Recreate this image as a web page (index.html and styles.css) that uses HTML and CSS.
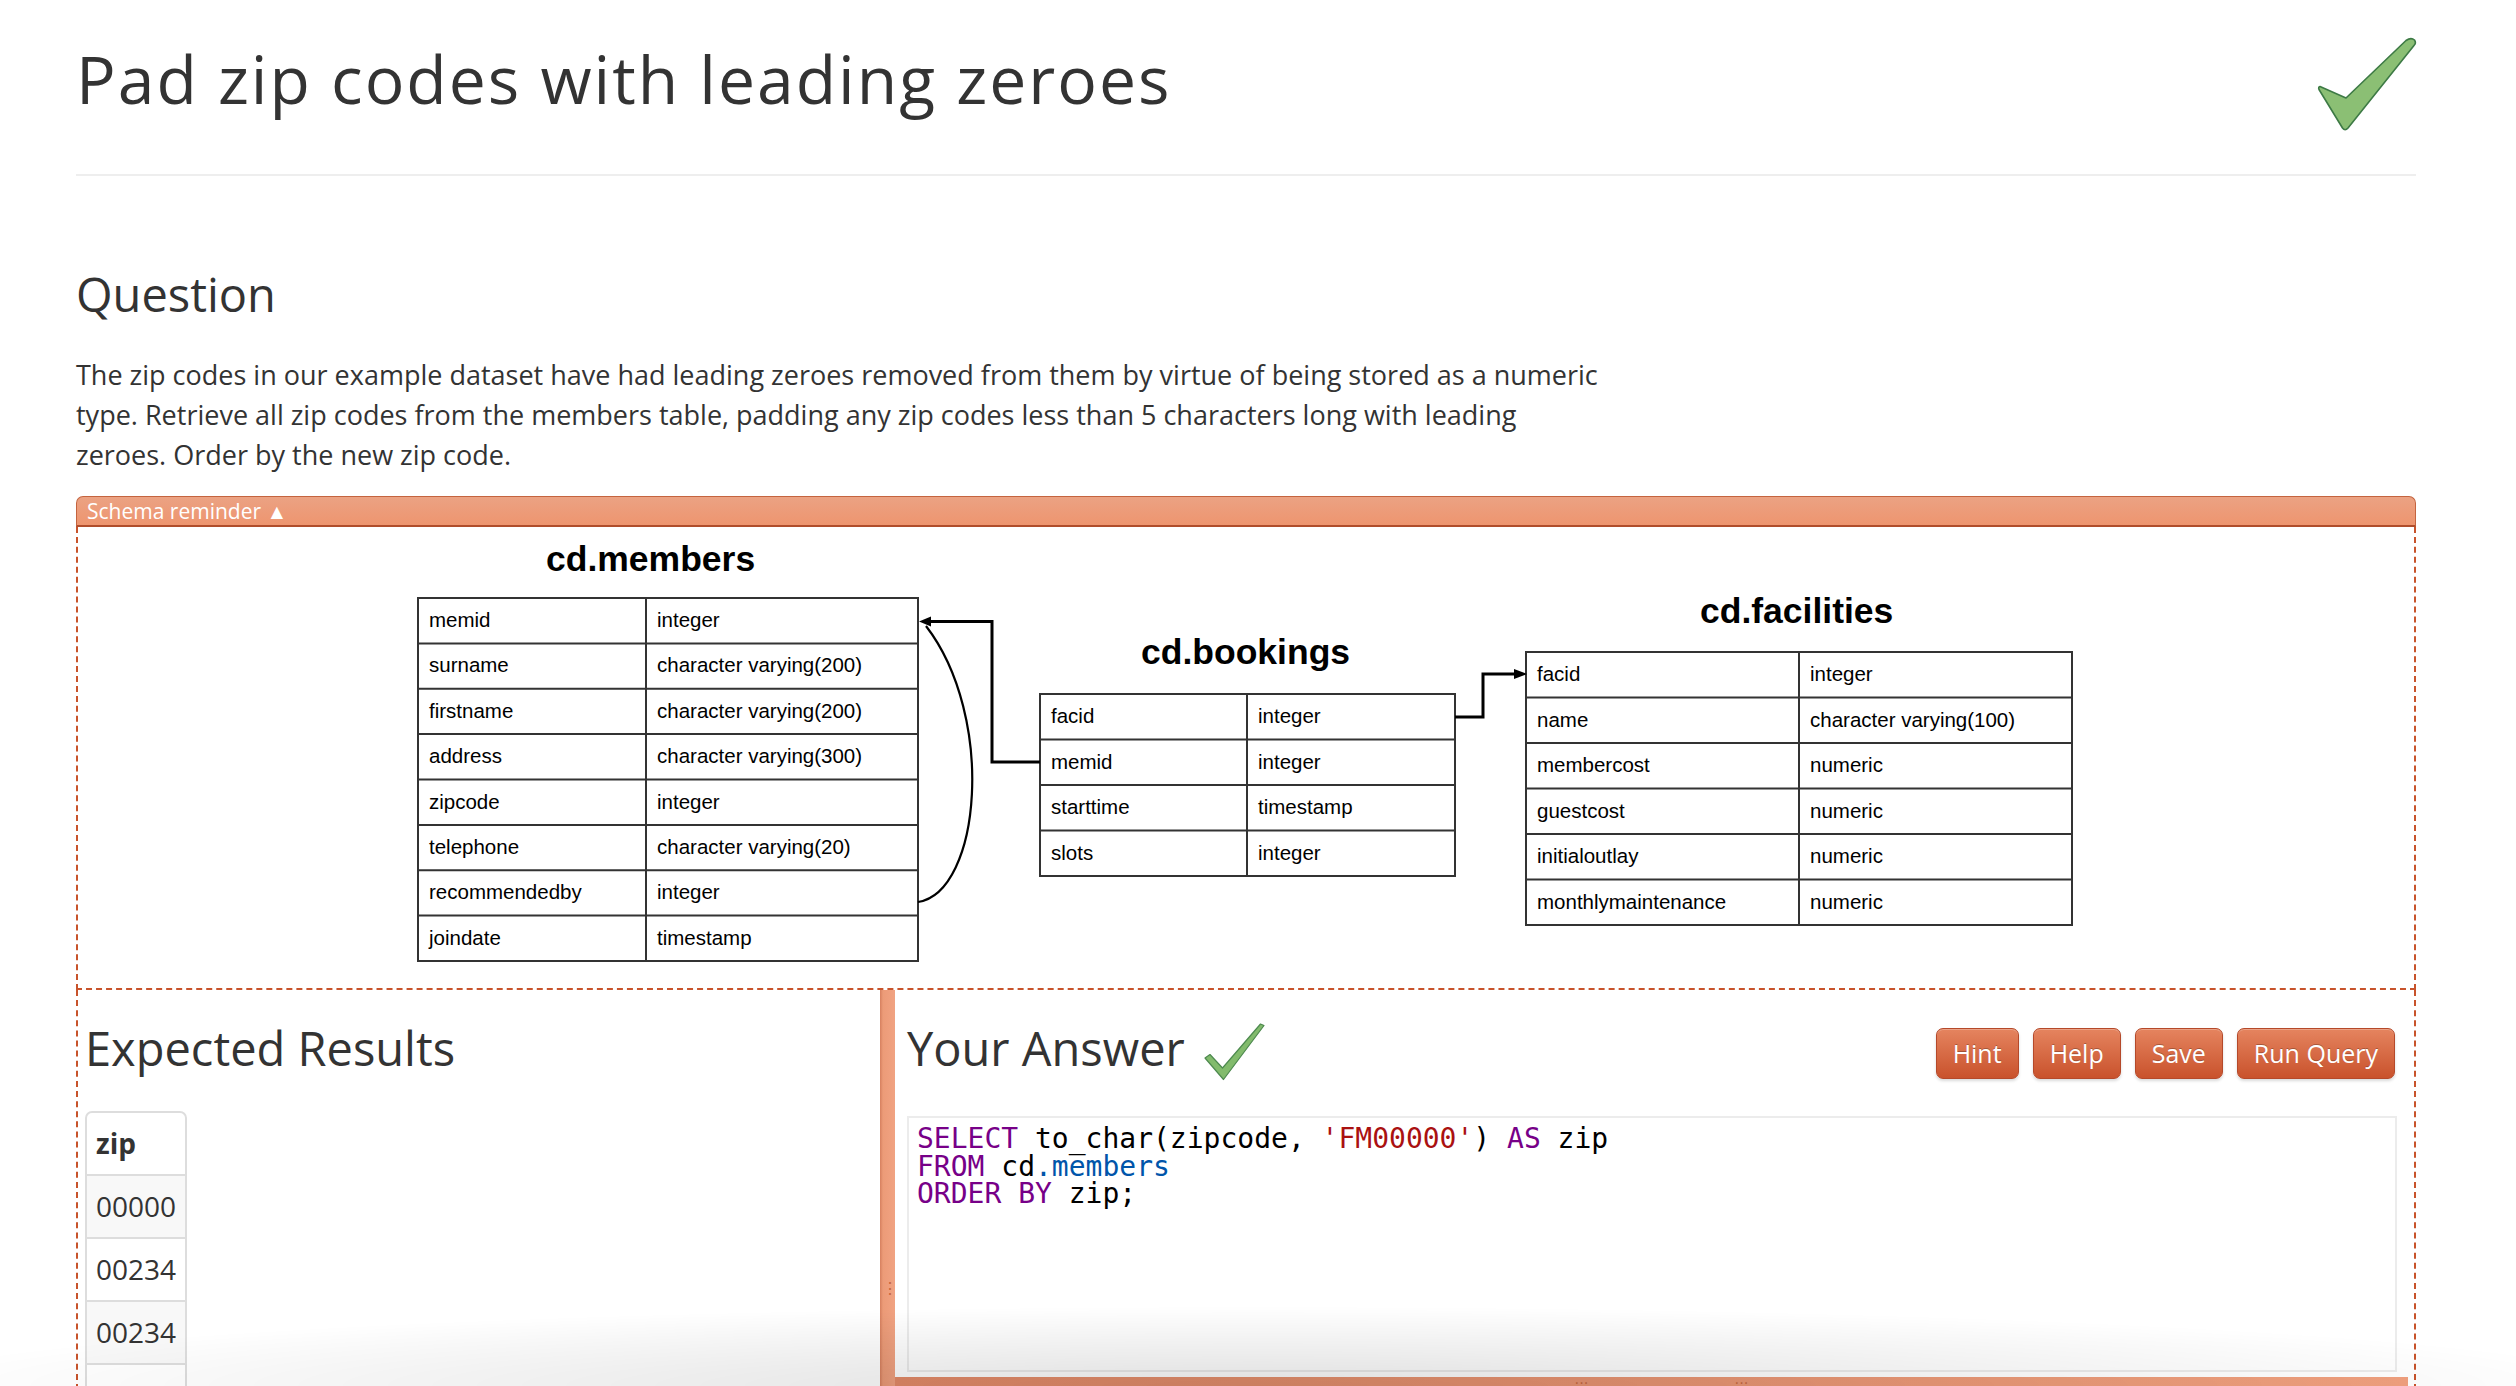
FILE: index.html
```
<!DOCTYPE html>
<html lang="en">
<head>
<meta charset="utf-8">
<title>Pad zip codes with leading zeroes</title>
<link rel="stylesheet" href="styles.css">
</head>
<body>
<div class="page">
  <div class="title-row">
    <h1 class="title">Pad zip codes with leading zeroes</h1>
    <svg class="big-check" width="110" height="105" viewBox="0 0 110 105">
      <path d="M10,56.5 L36,68 L96,10.5 Q101,7 104.5,10 Q106.5,13 104,15.5 L38,98 Q35,101.5 32.5,98 L9,59.5 Q8,57 10,56.5 Z" fill="#8bbf74" stroke="#3d7a45" stroke-width="1.6" stroke-linejoin="round"/>
    </svg>
  </div>
  <hr class="rule">

  <h2 class="section">Question</h2>
  <p class="question">The zip codes in our example dataset have had leading zeroes removed from them by virtue of being stored as a numeric type. Retrieve all zip codes from the members table, padding any zip codes less than 5 characters long with leading zeroes. Order by the new zip code.</p>

  <div class="schema-bar">Schema reminder ▲</div>
  <div class="schema-body">
    <svg class="diagram" width="1670" height="461" viewBox="0 0 1670 461">
      <text class="dg-title" x="135" y="44">cd.members</text>
      <text class="dg-title" x="730" y="137">cd.bookings</text>
      <text class="dg-title" x="1289" y="96">cd.facilities</text>

      <g class="dg-grid">
        <rect x="7" y="71" width="500" height="363"/>
        <path d="M7,116.4H507 M7,161.75H507 M7,207.1H507 M7,252.5H507 M7,297.9H507 M7,343.25H507 M7,388.6H507 M235,71V434"/>
        <rect x="629" y="167" width="415" height="182"/>
        <path d="M629,212.5H1044 M629,258H1044 M629,303.5H1044 M836,167V349"/>
        <rect x="1115" y="125" width="546" height="273"/>
        <path d="M1115,170.5H1661 M1115,216H1661 M1115,261.5H1661 M1115,307H1661 M1115,352.5H1661 M1388,125V398"/>
      </g>

      <g class="dg-cell">
        <text x="18" y="100">memid</text><text x="246" y="100">integer</text>
        <text x="18" y="145.4">surname</text><text x="246" y="145.4">character varying(200)</text>
        <text x="18" y="190.75">firstname</text><text x="246" y="190.75">character varying(200)</text>
        <text x="18" y="236.1">address</text><text x="246" y="236.1">character varying(300)</text>
        <text x="18" y="281.5">zipcode</text><text x="246" y="281.5">integer</text>
        <text x="18" y="326.9">telephone</text><text x="246" y="326.9">character varying(20)</text>
        <text x="18" y="372.25">recommendedby</text><text x="246" y="372.25">integer</text>
        <text x="18" y="417.6">joindate</text><text x="246" y="417.6">timestamp</text>

        <text x="640" y="196">facid</text><text x="847" y="196">integer</text>
        <text x="640" y="241.5">memid</text><text x="847" y="241.5">integer</text>
        <text x="640" y="287">starttime</text><text x="847" y="287">timestamp</text>
        <text x="640" y="332.5">slots</text><text x="847" y="332.5">integer</text>

        <text x="1126" y="154">facid</text><text x="1399" y="154">integer</text>
        <text x="1126" y="199.5">name</text><text x="1399" y="199.5">character varying(100)</text>
        <text x="1126" y="245">membercost</text><text x="1399" y="245">numeric</text>
        <text x="1126" y="290.5">guestcost</text><text x="1399" y="290.5">numeric</text>
        <text x="1126" y="336">initialoutlay</text><text x="1399" y="336">numeric</text>
        <text x="1126" y="381.5">monthlymaintenance</text><text x="1399" y="381.5">numeric</text>
      </g>

      <g class="dg-link">
        <path d="M629,235 H581 V94.5 H518"/>
        <path class="thin" d="M507,375 C570,365 585,190 515,99"/>
        <path d="M1044,190 H1072 V147 H1104"/>
      </g>
      <polygon points="508,94.5 520,89.5 520,99.5" fill="#000"/>
      <polygon points="1116,147 1103,142 1103,152" fill="#000"/>
    </svg>
  </div>

  <div class="workspace">
    <div class="results">
      <h3 class="panel-title">Expected Results</h3>
      <table class="zip-table">
        <thead><tr><th>zip</th></tr></thead>
        <tbody>
          <tr><td>00000</td></tr>
          <tr><td>00234</td></tr>
          <tr><td>00234</td></tr>
          <tr><td>04321</td></tr>
          <tr><td>04321</td></tr>
          <tr><td>10383</td></tr>
        </tbody>
      </table>
    </div>
    <div class="splitter"><span class="grip-v">⋮</span></div>
    <div class="answer">
      <div class="answer-head">
        <h3 class="panel-title">Your Answer<svg class="small-check" width="62" height="58" viewBox="0 0 62 58"><path d="M2,35 L7,31.5 L19.5,45 L57.5,1 L61,2.5 L20.5,56.5 Z" fill="#82bb6c" stroke="#4d8a4f" stroke-width="1.2" stroke-linejoin="round"/></svg></h3>
        <div class="actions">
          <button class="btn">Hint</button>
          <button class="btn">Help</button>
          <button class="btn">Save</button>
          <button class="btn">Run Query</button>
        </div>
      </div>
      <div class="editor"><pre class="code"><span class="kw">SELECT</span> to_char(zipcode, <span class="str">'FM00000'</span>) <span class="kw">AS</span> zip
<span class="kw">FROM</span> cd<span class="var">.members</span>
<span class="kw">ORDER BY</span> zip;</pre></div>
      <div class="hbar"><span class="grip-h g1">···</span><span class="grip-h g2">···</span></div>
    </div>
  </div>
</div>
<div class="fade"></div>
</body>
</html>
```
FILE: styles.css
```
* { box-sizing: border-box; }

html, body {
  margin: 0;
  height: 1386px;
  overflow: hidden;
  background: #fff;
}

body {
  font-family: "Open Sans", Lato, sans-serif;
  color: #333;
}

.page {
  margin-left: 76px;
  width: 2340px;
  padding-top: 40px;
}

.title-row {
  display: flex;
  justify-content: space-between;
  align-items: flex-start;
  height: 76px;
}

.title {
  margin: 0;
  font-size: 66px;
  font-weight: 400;
  line-height: 76px;
  letter-spacing: 2px;
  color: #333;
}

.big-check {
  margin-top: -10px;
  margin-right: -4px;
  flex: none;
}

.rule {
  margin: 58px 0 0;
  border: 0;
  border-top: 2px solid #eeeeee;
  height: 0;
}

.section {
  margin: 90px 0 0;
  font-size: 47px;
  font-weight: 400;
  line-height: 56px;
}

.question {
  margin: 33px 0 0;
  width: 1528px;
  font-size: 27px;
  line-height: 40px;
}

.schema-bar {
  margin-top: 21px;
  height: 31px;
  padding-left: 10px;
  border: 1px solid #c4643f;
  border-bottom: 2px solid #b04d2b;
  border-radius: 7px 7px 0 0;
  background: linear-gradient(#eba283, #ee956f);
  color: #fff;
  font-size: 21px;
  line-height: 28px;
}

.schema-body {
  display: flex;
  justify-content: center;
  height: 463px;
  border: 2px dashed #c8532b;
  border-top: 0;
}

.diagram { display: block; flex: none; }

.dg-title {
  font-family: "Liberation Sans", Arial, sans-serif;
  font-weight: 700;
  font-size: 35.5px;
  fill: #000;
}

.dg-cell {
  font-family: "Liberation Sans", Arial, sans-serif;
  font-size: 20.5px;
  fill: #000;
}

.dg-grid rect,
.dg-grid path {
  fill: none;
  stroke: #333;
  stroke-width: 2;
}

.dg-link path {
  fill: none;
  stroke: #000;
  stroke-width: 3;
}

.dg-link .thin { stroke-width: 2.2; }

.workspace {
  display: flex;
  height: 400px;
  border-left: 2px dashed #c8532b;
  border-right: 2px dashed #c8532b;
}

.results {
  width: 802px;
  padding-left: 7px;
  flex: none;
}

.panel-title {
  margin: 30px 0 0;
  font-size: 47px;
  font-weight: 400;
  line-height: 56px;
  white-space: nowrap;
}

.zip-table {
  margin-top: 35px;
  border-collapse: separate;
  border-spacing: 0;
  border: 2px solid #dddddd;
  border-radius: 7px 7px 0 0;
  font-size: 28px;
  line-height: 35px;
}

.zip-table th,
.zip-table td {
  padding: 13px 9px;
  text-align: left;
}

.zip-table th { font-weight: 700; }

.zip-table td { border-top: 2px solid #dddddd; }

.zip-table tbody tr:nth-child(odd) td { background: #f8f8f8; }

.splitter {
  position: relative;
  width: 15px;
  flex: none;
  background: linear-gradient(to right, #d6805f 0, #ec9b78 3px, #f1a382 100%);
}

.grip-v {
  position: absolute;
  left: 2px;
  top: 290px;
  font-size: 16px;
  color: #c5673f;
  line-height: 1;
}

.answer {
  flex: 1;
  min-width: 0;
}

.answer-head {
  display: flex;
  justify-content: space-between;
  align-items: flex-start;
  padding: 0 19px 0 12px;
}

.small-check {
  vertical-align: top;
  margin-top: 3px;
  margin-left: 18px;
}

.actions {
  display: flex;
  gap: 14px;
  margin-top: 38px;
}

.btn {
  height: 51px;
  padding: 0 16px;
  border: 1px solid #b5492a;
  border-radius: 7px;
  background: linear-gradient(#e5845f, #c9522c);
  box-shadow: inset 0 1px 0 rgba(255, 255, 255, 0.25), 0 2px 3px rgba(0, 0, 0, 0.15);
  color: #fff;
  font-family: "Open Sans", Lato, sans-serif;
  font-size: 25px;
  line-height: 49px;
  text-shadow: 0 -1px 0 rgba(0, 0, 0, 0.25);
}

.editor {
  height: 256px;
  margin: 35px 17px 0 12px;
  border: 2px solid #ececec;
  padding: 7px 8px;
  background: #fff;
}

.code {
  margin: 0;
  font-family: "DejaVu Sans Mono", "Liberation Mono", monospace;
  font-size: 28px;
  line-height: 27.5px;
  color: #000;
}

.kw { color: #770088; }
.str { color: #aa1111; }
.var { color: #0055aa; }

.hbar {
  position: relative;
  height: 20px;
  margin: 5px 6px 0 0;
  background: linear-gradient(to right, #e48b69, #f1a17f);
}

.grip-h {
  position: absolute;
  top: -4px;
  font-size: 14px;
  color: #c5673f;
  letter-spacing: 1px;
}

.g1 { left: 680px; }
.g2 { left: 840px; }

.fade {
  position: fixed;
  left: 0;
  right: 0;
  bottom: 0;
  height: 80px;
  pointer-events: none;
  background: radial-gradient(ellipse 55% 100% at 50% 100%, rgba(0, 0, 0, 0.12), rgba(0, 0, 0, 0) 100%);
}
```
